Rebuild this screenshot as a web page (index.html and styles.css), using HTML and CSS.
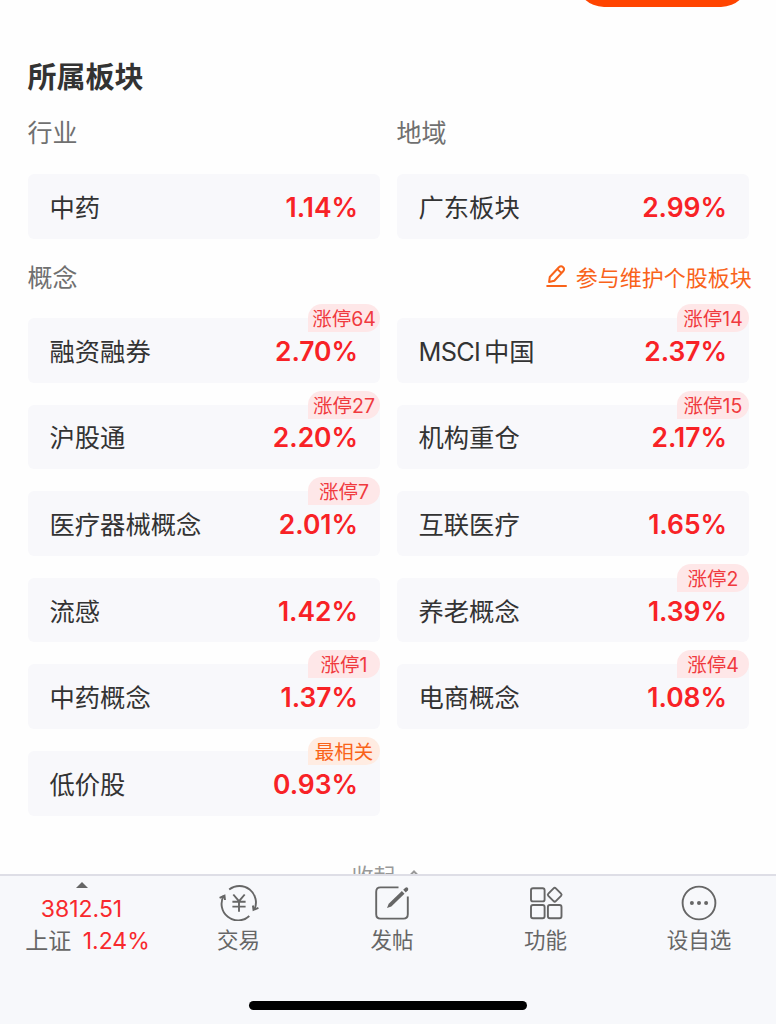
FILE: index.html
```
<!DOCTYPE html>
<html lang="zh-CN">

<head>
    <meta charset="UTF-8">
    <meta name="viewport" content="width=device-width, initial-scale=1.0">
    <title>所属板块</title>
    <link rel="stylesheet" href="styles.css">
</head>

<body>
    <main class="content">
        <div class="top_strip">
            <div class="top_btn"></div>
        </div>
        <h1 class="title">所属板块</h1>

        <div class="grid labels">
            <span>行业</span>
            <span>地域</span>
        </div>
        <div class="grid">
            <div class="card"><span>中药</span><b>1.14%</b></div>
            <div class="card"><span>广东板块</span><b>2.99%</b></div>
        </div>

        <div class="concept_head">
            <span>概念</span>
            <a class="edit">
                <svg width="22" height="24" viewBox="0 0 22 24" fill="none" stroke="#f9631a" stroke-width="2" stroke-linejoin="round" stroke-linecap="round">
                    <path d="M3.1 18L3.8 13L12.9 3.3Q15 1.3 17.1 3.2Q19 5.2 17.2 7.3L8.3 16.7ZM11.4 5.1L15.3 8.9" />
                    <path d="M1.2 22H20" />
                </svg>
                <span>参与维护个股板块</span>
            </a>
        </div>
        <div class="grid concepts">
            <div class="card"><span>融资融券</span><b>2.70%</b><i class="tag">涨停64</i></div>
            <div class="card"><span class="latin">MSCI<em>中国</em></span><b>2.37%</b><i class="tag">涨停14</i></div>
            <div class="card"><span>沪股通</span><b>2.20%</b><i class="tag">涨停27</i></div>
            <div class="card"><span>机构重仓</span><b>2.17%</b><i class="tag">涨停15</i></div>
            <div class="card"><span>医疗器械概念</span><b>2.01%</b><i class="tag">涨停7</i></div>
            <div class="card"><span>互联医疗</span><b>1.65%</b></div>
            <div class="card"><span>流感</span><b>1.42%</b></div>
            <div class="card"><span>养老概念</span><b>1.39%</b><i class="tag">涨停2</i></div>
            <div class="card"><span>中药概念</span><b>1.37%</b><i class="tag">涨停1</i></div>
            <div class="card"><span>电商概念</span><b>1.08%</b><i class="tag">涨停4</i></div>
            <div class="card"><span>低价股</span><b>0.93%</b><i class="tag hot">最相关</i></div>
        </div>

        <div class="fold">
            <span>收起</span>
            <svg width="14" height="10" viewBox="0 0 14 10" fill="none" stroke="#999" stroke-width="2">
                <path d="M2 7.5L7 2.5L12 7.5" />
            </svg>
        </div>
    </main>

    <footer class="bottom">
        <nav class="tabs">
            <div class="index">
                <div class="arrow"></div>
                <div class="red">3812.51</div>
                <div class="index_row">上证 <span class="red">1.24%</span></div>
            </div>
            <div class="tab">
                <svg width="42" height="36" viewBox="0 0 42 36" fill="none" stroke="#666" stroke-width="1.9">
                    <path d="M11.2 4.6A16.5 16.5 0 0 1 36.4 24.5" />
                    <path d="M40.4 22.8L35.5 24.9L34.9 20.5" />
                    <path d="M31.3 31A16.5 16.5 0 0 1 5.7 10.8" />
                    <path d="M1.6 12.8L6.5 10.6L7 15" />
                    <path d="M15.3 9.5L21 16.2L26.7 9.5M21 16V26.8M14.4 16.8H27.6M14.4 21.6H27.6" />
                </svg>
                <span>交易</span>
            </div>
            <div class="tab">
                <svg width="36" height="36" viewBox="0 0 36 36" fill="none" stroke="#666" stroke-width="1.9">
                    <path d="M24.5 2.4H6.5Q2.2 2.4 2.2 6.7V29.3Q2.2 33.6 6.5 33.6H29.5Q33.8 33.6 33.8 29.3V11.5" />
                    <path d="M13 23.1L14.7 18.7L27.9 6.1L30.5 8.8L17.3 21.4Z" fill="#666" stroke="none" />
                    <path d="M29.2 4.8L31.4 2.7Q32.6 1.8 33.7 2.8Q34.8 4 33.9 5.2L31.8 7.5Z" fill="#666" stroke="none" />
                </svg>
                <span>发帖</span>
            </div>
            <div class="tab">
                <svg width="36" height="36" viewBox="0 0 36 36" fill="none" stroke="#666" stroke-width="1.9">
                    <rect x="3" y="3.2" width="13.6" height="13.2" rx="2" />
                    <rect x="3" y="20" width="13.6" height="13.2" rx="2" />
                    <rect x="19.9" y="20" width="13.6" height="13.2" rx="2" />
                    <rect x="21.4" y="4.4" width="10.6" height="10.6" rx="1.6" transform="rotate(45 26.7 9.7)" />
                </svg>
                <span>功能</span>
            </div>
            <div class="tab">
                <svg width="36" height="36" viewBox="0 0 36 36" fill="none" stroke="#666" stroke-width="1.9">
                    <circle cx="18" cy="18" r="16.4" />
                    <g fill="#666" stroke="none">
                        <circle cx="10.9" cy="18" r="2" />
                        <circle cx="18" cy="18" r="2" />
                        <circle cx="25.1" cy="18" r="2" />
                    </g>
                </svg>
                <span>设自选</span>
            </div>
        </nav>
        <div class="home_bar"></div>
    </footer>
</body>

</html>
```
FILE: styles.css
```
* {
    margin: 0;
    padding: 0;
    box-sizing: border-box;
}

body {
    height: 1024px;
    display: flex;
    flex-direction: column;
    overflow: hidden;
    background: #fefefe;
    color: #333;
    font-family: Inter, "Noto Sans CJK SC", sans-serif;
    font-size: 25.3px;
}

i,
em {
    font-style: normal;
}

.content {
    height: 874px;
    padding: 0 27.3px 0 27.5px;
    overflow: hidden;
}

.top_strip {
    height: 7px;
    display: flex;
    justify-content: flex-end;
    align-items: flex-end;
    overflow: hidden;
}

.top_btn {
    flex: none;
    width: 173px;
    height: 56px;
    border-radius: 28px;
    background: #ff4400;
}

.title {
    margin-top: 49px;
    height: 44px;
    line-height: 44px;
    font-size: 29px;
    font-weight: bold;
}

.grid {
    display: grid;
    grid-template-columns: 352.5px 352.5px;
    column-gap: 16.5px;
    row-gap: 22px;
}

.labels {
    margin-top: 13px;
    height: 61px;
    line-height: 40px;
    color: #707070;
    font-size: 25px;
}

.card {
    position: relative;
    display: flex;
    justify-content: space-between;
    align-items: center;
    height: 64.6px;
    padding: 0 22px;
    border-radius: 6px;
    background: #f8f8fb;
}

.card span {
    padding-bottom: 1px;
}

.card .latin {
    letter-spacing: -0.7px;
}

.card em {
    margin-left: 4px;
    letter-spacing: 0;
}

.card b {
    padding-top: 1px;
    color: #f82226;
    font-size: 26.4px;
    font-weight: 600;
}

.tag {
    position: absolute;
    top: -14px;
    right: 0;
    width: 72px;
    height: 28px;
    border-radius: 14px 14px 14px 0;
    background: #fee7e8;
    color: #f03a3e;
    font-size: 19.5px;
    line-height: 30px;
    text-align: center;
}

.hot {
    background: #ffece2;
    color: #f9631a;
}

.concept_head {
    display: flex;
    justify-content: space-between;
    align-items: center;
    height: 79.4px;
    margin-right: -3px;
    padding-bottom: 5px;
    color: #707070;
    font-size: 25px;
}

.edit {
    display: flex;
    align-items: center;
    gap: 8px;
    color: #f9631a;
    font-size: 22px;
}

.fold {
    display: flex;
    justify-content: center;
    align-items: center;
    gap: 11px;
    margin: 40px 4px 0 0;
    height: 36px;
    color: #999;
    font-size: 22px;
}

.bottom {
    flex: 1;
    display: flex;
    flex-direction: column;
    justify-content: space-between;
    align-items: center;
    border-top: 2px solid #dedee6;
    background: #f7f8fb;
}

.tabs {
    width: 100%;
    display: grid;
    grid-template-columns: 162px 153px 154px 153px 154px;
    color: #666;
    font-size: 21.5px;
}

.index {
    display: flex;
    flex-direction: column;
    align-items: center;
    padding: 6px 0 0 1px;
    font-size: 23px;
    line-height: 32px;
}

.arrow {
    border: 6px solid transparent;
    border-top: none;
    border-bottom-color: #666;
    margin-bottom: 5px;
}

.index_row {
    margin-left: 12px;
    white-space: nowrap;
    word-spacing: 5px;
}

.red {
    color: #f8292d;
}

.tab {
    display: flex;
    flex-direction: column;
    align-items: center;
    padding-top: 9px;
}

.tab span {
    line-height: 38px;
}

.home_bar {
    width: 278px;
    height: 9px;
    margin-bottom: 14.5px;
    border-radius: 5px;
    background: #000;
}
```
